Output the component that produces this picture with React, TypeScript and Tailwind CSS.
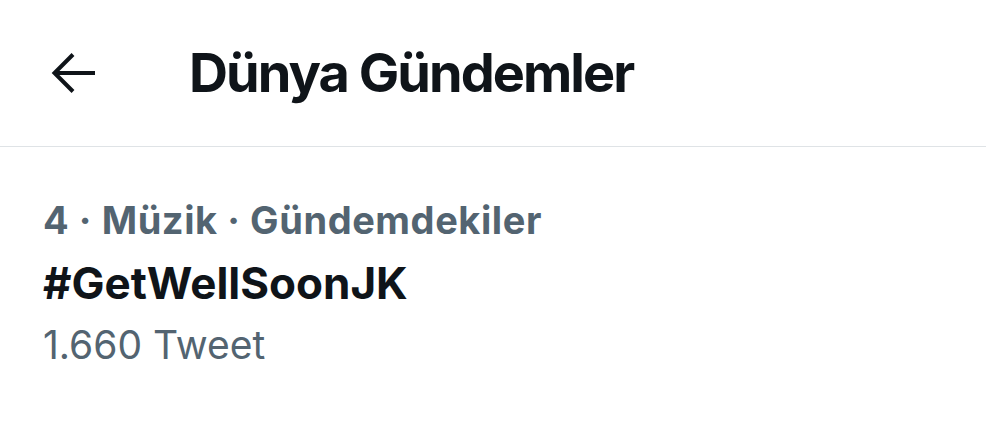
export default function App() {
  return (
    <div className="w-[986px] h-[440px] bg-white font-['Inter',sans-serif] overflow-hidden">
      {/* Header */}
      <div className="flex h-[147px] items-center border-b border-[#dfe3e6] pl-[50px]">
        <svg width="48" height="48" viewBox="0 0 48 48" fill="none" className="shrink-0">
          <path
            d="M23 5.5 L4.5 24 L23 42.5 M4.5 24 H45"
            stroke="#0f1419"
            strokeWidth="4"
            strokeLinejoin="miter"
          />
        </svg>
        <h1 className="ml-[91px] text-[54px] leading-[54px] font-bold tracking-[-0.036em] text-[#0f1419]">
          Dünya Gündemler
        </h1>
      </div>

      {/* Trend */}
      <div className="pl-[43px] pt-[54px]">
        <p className="text-[38px] leading-[38px] font-bold tracking-[0.015em] text-[#536471]">
          4 · Müzik · Gündemdekiler
        </p>
        <p className="mt-[22px] text-[44px] leading-[44px] font-bold text-[#0f1419]">
          #GetWellSoonJK
        </p>
        <p className="mt-[20px] text-[39px] leading-[39px] text-[#536471]">
          1.660 Tweet
        </p>
      </div>
    </div>
  )
}
